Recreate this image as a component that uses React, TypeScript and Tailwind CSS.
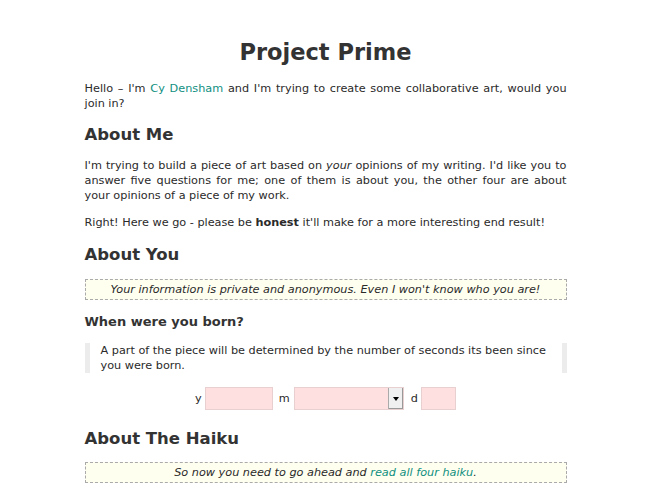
import React from "react";

export default function App() {
  const font = { fontFamily: '"DejaVu Sans", Verdana, sans-serif' };
  return (
    <div className="min-h-[490px] bg-white text-[#2a2a2a]" style={font}>
      <div className="mx-auto w-[482px] pt-[37px] text-[11.25px] leading-[15px]">
        <h1 className="text-center text-[22.5px] font-bold leading-[30px] text-[#333]">Project Prime</h1>
        <p className="mt-[14px] text-justify">
          Hello – I'm <a className="text-[#0f8f7f]">Cy Densham</a> and I'm trying to create some collaborative art, would you join in?
        </p>
        <h2 className="mt-[12px] text-[16.5px] font-bold leading-[24px] text-[#333]">About Me</h2>
        <p className="mt-[11px] text-justify">
          I'm trying to build a piece of art based on <em>your</em> opinions of my writing. I'd like you to answer five questions for me; one of them is about you, the other four are about your opinions of a piece of my work.
        </p>
        <p className="mt-[12px] text-justify">
          Right! Here we go - please be <strong>honest</strong> it'll make for a more interesting end result!
        </p>
        <h2 className="mt-[13px] text-[16.5px] font-bold leading-[24px] text-[#333]">About You</h2>
        <div className="mt-[12px] border border-dashed border-[#aaa] bg-[#fffff0] py-[2px] text-center italic">
          Your information is private and anonymous. Even I won't know who you are!
        </div>
        <h3 className="mt-[13px] text-[13px] font-bold leading-[18px] text-[#333]">When were you born?</h3>
        <div className="mt-[12px] border-x-[5px] border-[#ececec] py-0 pl-[11px] pr-[12px]">
          A part of the piece will be determined by the number of seconds its been since you were born.
        </div>
        <div className="mt-[14px] flex items-center justify-center">
          <span>y</span>
          <input className="ml-[3px] h-[23px] w-[68px] border border-[#e8d0d0] bg-[#ffe0e0]" />
          <span className="ml-[6px]">m</span>
          <div className="ml-[4px] flex h-[23px] w-[110px] border border-[#e8d0d0] bg-[#ffe0e0]">
            <div className="flex-1" />
            <div className="flex w-[15px] items-center justify-center border-l border-[#aaa] bg-[#f0f0f0] shadow-[inset_-1px_-1px_0_#999]">
              <svg width="6" height="4" viewBox="0 0 6 4"><path d="M0 0h6L3 4z" fill="#000" /></svg>
            </div>
          </div>
          <span className="ml-[7px]">d</span>
          <input className="ml-[3px] h-[23px] w-[35px] border border-[#e8d0d0] bg-[#ffe0e0]" />
        </div>
        <h2 className="mt-[17px] text-[16.5px] font-bold leading-[24px] text-[#333]">About The Haiku</h2>
        <div className="mt-[11px] border border-dashed border-[#aaa] bg-[#fffff0] py-[2px] text-center italic">
          So now you need to go ahead and <a className="text-[#0f8f7f]">read all four haiku</a>.
        </div>
      </div>
    </div>
  );
}
